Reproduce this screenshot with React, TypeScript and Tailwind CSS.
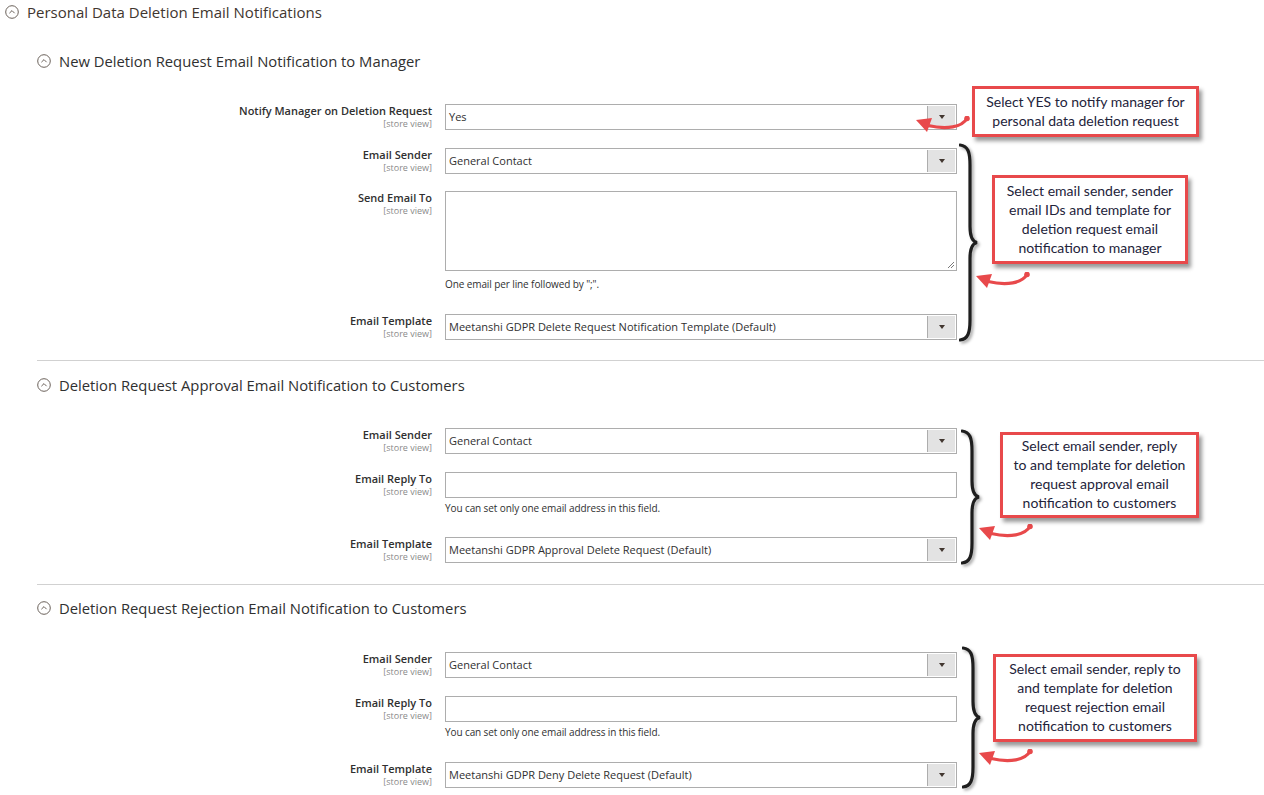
import React from "react";

// ── Small drawings ─────────────────────────────────────────────────────────
function CollapseIcon() {
  return (
    <svg viewBox="0 0 14 14" className="h-[14px] w-[14px] shrink-0" aria-hidden="true">
      <circle cx="7" cy="7" r="6.3" fill="none" stroke="#6b625b" strokeWidth="1" />
      <path d="M4.4 8.2 L7 5.6 L9.6 8.2" fill="none" stroke="#6b625b" strokeWidth="1" />
    </svg>
  );
}

function Brace({ height }: { height: number }) {
  const h = height;
  const m = h / 2;
  const d = `M1 2 C9 3 11 9 11 22 L11 ${m - 16} C11 ${m - 6} 13 ${m - 1} 18 ${m} C13 ${m + 1} 11 ${m + 6} 11 ${m + 16} L11 ${h - 22} C11 ${h - 9} 9 ${h - 3} 1 ${h - 2}`;
  return (
    <svg width="22" height={h} viewBox={`0 0 22 ${h}`} aria-hidden="true" className="drop-shadow-[2px_2px_1.5px_rgba(0,0,0,0.35)]">
      <path d={d} fill="none" stroke="#1e1e1e" strokeWidth="3.2" strokeLinecap="round" />
    </svg>
  );
}

function CurvedArrow() {
  return (
    <svg width="58" height="20" viewBox="0 0 58 20" aria-hidden="true">
      <path d="M52 2.5 C47 11 32 14 13 9.5" fill="none" stroke="#e8494b" strokeWidth="3.2" strokeLinecap="round" />
      <circle cx="52" cy="2.5" r="2.8" fill="#e8494b" />
      <polygon points="1,4 17,2 12,16" fill="#e8494b" />
    </svg>
  );
}

// ── Form controls ──────────────────────────────────────────────────────────
function Label({ text }: { text: string }) {
  return (
    <div className="w-[395px] shrink-0 text-right">
      <div className="text-[11px] font-semibold text-[#303030] leading-[14px]">{text}</div>
      <div className="text-[9px] text-[#8a8a8a] leading-[11px]">[store view]</div>
    </div>
  );
}

function Select({ value }: { value: string }) {
  return (
    <div className="flex h-[26px] w-[512px] items-stretch border border-[#adadad] bg-white">
      <div className="flex flex-1 items-center pl-[3px] text-[11px] text-[#303030]">{value}</div>
      <div className="m-[1px] ml-0 flex w-[28px] items-center justify-center border-l border-[#adadad] bg-[#e3e3e3]">
        <span className="block h-0 w-0 border-x-[3px] border-t-[4px] border-x-transparent border-t-[#41362f]" />
      </div>
    </div>
  );
}

function Field({ label, children, className = "" }: { label: string; children: React.ReactNode; className?: string }) {
  return (
    <div className={`flex gap-[13px] ${className}`}>
      <Label text={label} />
      <div>{children}</div>
    </div>
  );
}

function Note({ text, className = "" }: { text: string; className?: string }) {
  return <div className={`pl-[408px] text-[10px] tracking-[-0.1px] leading-[13px] text-[#303030] ${className}`}>{text}</div>;
}

function TextInput() {
  return <div className="h-[26px] w-[512px] border border-[#adadad] bg-white" />;
}

function TextArea() {
  return (
    <div className="relative h-[80px] w-[512px] border border-[#adadad] bg-white">
      <svg width="9" height="9" viewBox="0 0 9 9" className="absolute bottom-[1px] right-[1px]" aria-hidden="true">
        <path d="M8 2 L2 8 M8 5 L5 8" stroke="#7a7a7a" strokeWidth="1" />
      </svg>
    </div>
  );
}

function SectionTitle({ text, className = "" }: { text: string; className?: string }) {
  return (
    <div className={`flex h-6 items-center gap-[8px] ${className}`}>
      <CollapseIcon />
      <span className="text-[14.8px] font-medium text-[#303030]">{text}</span>
    </div>
  );
}

function Callout({ lines, className }: { lines: string[]; className: string }) {
  return (
    <div
      className={`absolute flex flex-col items-center justify-center border-[3px] border-[#e8494b] bg-white pb-[2px] text-center text-[14px] leading-[19px] text-[#23233a] shadow-[3px_4px_4px_rgba(0,0,0,0.4)] ${className}`}
      style={{ fontFamily: "Lato, 'Noto Sans', sans-serif" }}
    >
      {lines.map((l) => (
        <div key={l}>{l}</div>
      ))}
    </div>
  );
}

export default function App() {
  return (
    <div
      className="relative h-[795px] w-full overflow-hidden bg-white"
      style={{ fontFamily: "'Open Sans', 'Noto Sans', sans-serif" }}
    >
      {/* Main group title */}
      <div className="flex h-6 items-center gap-[8px] pl-[5px]">
        <CollapseIcon />
        <span className="text-[15px] text-[#41362f]">Personal Data Deletion Email Notifications</span>
      </div>

      <div className="pl-[37px]">
        {/* ── Section 1 ── */}
        <SectionTitle text="New Deletion Request Email Notification to Manager" className="mt-[25px]" />
        <Field label="Notify Manager on Deletion Request" className="mt-[31px]">
          <Select value="Yes" />
        </Field>
        <Field label="Email Sender" className="mt-[18px]">
          <Select value="General Contact" />
        </Field>
        <Field label="Send Email To" className="mt-[17px]">
          <TextArea />
        </Field>
        <Note text={'One email per line followed by ";".'} className="mt-[7px]" />
        <Field label="Email Template" className="mt-[23px]">
          <Select value="Meetanshi GDPR Delete Request Notification Template (Default)" />
        </Field>
        <div className="mt-[20px] border-t border-[#d1d1d1]" />

        {/* ── Section 2 ── */}
        <SectionTitle text="Deletion Request Approval Email Notification to Customers" className="mt-[12px]" />
        <Field label="Email Sender" className="mt-[31px]">
          <Select value="General Contact" />
        </Field>
        <Field label="Email Reply To" className="mt-[18px]">
          <TextInput />
        </Field>
        <Note text="You can set only one email address in this field." className="mt-[4px]" />
        <Field label="Email Template" className="mt-[22px]">
          <Select value="Meetanshi GDPR Approval Delete Request (Default)" />
        </Field>
        <div className="mt-[21px] border-t border-[#d1d1d1]" />

        {/* ── Section 3 ── */}
        <SectionTitle text="Deletion Request Rejection Email Notification to Customers" className="mt-[11px]" />
        <Field label="Email Sender" className="mt-[32px]">
          <Select value="General Contact" />
        </Field>
        <Field label="Email Reply To" className="mt-[18px]">
          <TextInput />
        </Field>
        <Note text="You can set only one email address in this field." className="mt-[4px]" />
        <Field label="Email Template" className="mt-[23px]">
          <Select value="Meetanshi GDPR Deny Delete Request (Default)" />
        </Field>
      </div>

      {/* ── Annotations ── */}
      <div className="absolute left-[959px] top-[143px]">
        <Brace height={199} />
      </div>
      <div className="absolute left-[961px] top-[429px]">
        <Brace height={136} />
      </div>
      <div className="absolute left-[962px] top-[646px]">
        <Brace height={143} />
      </div>

      <div className="absolute left-[915px] top-[116px]">
        <CurvedArrow />
      </div>
      <div className="absolute left-[975px] top-[272px]">
        <CurvedArrow />
      </div>
      <div className="absolute left-[978px] top-[524px]">
        <CurvedArrow />
      </div>
      <div className="absolute left-[978px] top-[749px]">
        <CurvedArrow />
      </div>

      <Callout
        className="left-[972px] top-[86px] h-[51px] w-[227px]"
        lines={["Select YES to notify manager for", "personal data deletion request"]}
      />
      <Callout
        className="left-[992px] top-[175px] h-[89px] w-[196px]"
        lines={["Select email sender, sender", "email IDs and template for", "deletion request email", "notification to manager"]}
      />
      <Callout
        className="left-[1000px] top-[432px] h-[86px] w-[199px]"
        lines={["Select email sender, reply", "to and template for deletion", "request approval email", "notification to customers"]}
      />
      <Callout
        className="left-[993px] top-[654px] h-[88px] w-[204px]"
        lines={["Select email sender, reply to", "and template for deletion", "request rejection email", "notification to customers"]}
      />
    </div>
  );
}
